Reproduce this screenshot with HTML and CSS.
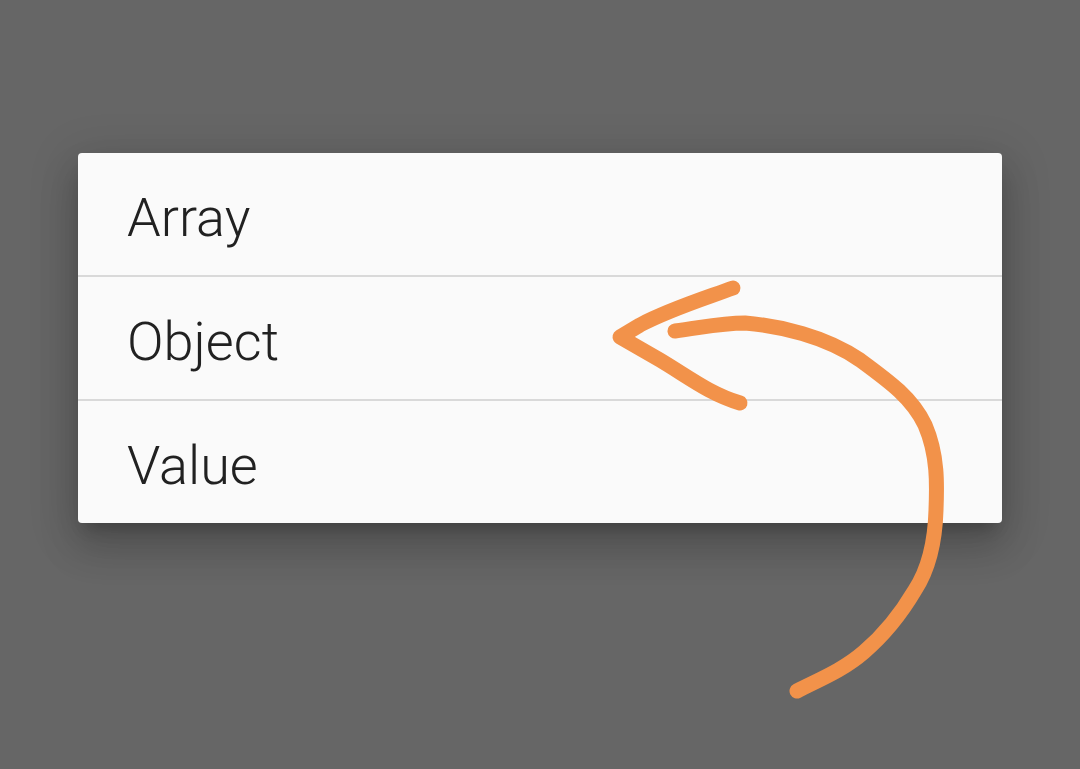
FILE: index.html
```html
<!DOCTYPE html>
<html>
<head>
<meta charset="utf-8">
<link rel="stylesheet" href="styles.css">
</head>
<body>
<div class="stage">
  <div class="menu">
    <div class="item">Array</div>
    <div class="item">Object</div>
    <div class="item">Value</div>
  </div>
  <svg class="scribble" width="1080" height="769" viewBox="0 0 1080 769">
    <path d="M733 288 C700 300 668 310 640 325 L620 337 L660 360 C690 378 710 394 740 403" />
    <path d="M675 331 C700 328 720 323 745 323 C780 326 825 336 860 360 C890 382 912 398 925 425 C938 455 937 485 936 510 C935 545 928 570 915 590 C902 612 885 634 864 652 C842 671 818 680 797 691" />
  </svg>
</div>
</body>
</html>
```

FILE: styles.css
```css
html, body {
  margin: 0;
  padding: 0;
  background: #666666;
}
.stage {
  width: 1080px;
  height: 769px;
  padding: 153px 0 0 78px;
  box-sizing: border-box;
  overflow: hidden;
}
.menu {
  width: 924px;
  background: #fafafa;
  border-radius: 4px;
  box-shadow: 0 24px 38px 3px rgba(0,0,0,0.14), 0 9px 46px 8px rgba(0,0,0,0.12), 0 11px 15px -7px rgba(0,0,0,0.2);
  font-family: Roboto, "Noto Sans", sans-serif;
  font-weight: 300;
  color: #212121;
}
.item {
  height: 122px;
  box-sizing: border-box;
  padding: 8px 0 0 49px;
  font-size: 54px;
  line-height: 114px;
}
.item + .item {
  height: 124px;
  border-top: 2px solid #d9d9d9;
}
.scribble {
  position: absolute;
  left: 0;
  top: 0;
  pointer-events: none;
}
.scribble path {
  fill: none;
  stroke: #f2924a;
  stroke-width: 15;
  stroke-linecap: round;
  stroke-linejoin: round;
}
```
